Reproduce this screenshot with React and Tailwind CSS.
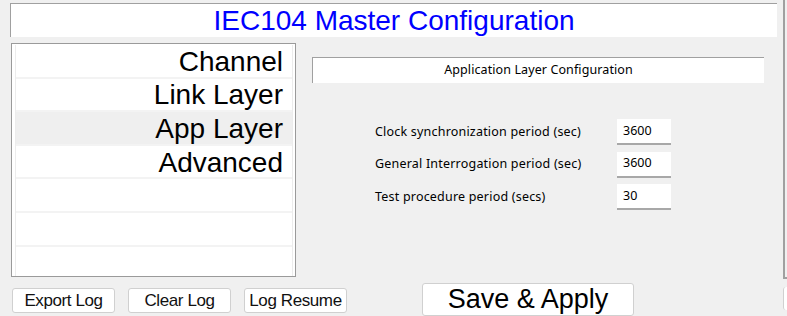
import React from "react";

const sections = ["Channel", "Link Layer", "App Layer", "Advanced", "", "", ""];

const fields = [
  { label: "Clock synchronization period (sec)", value: "3600" },
  { label: "General Interrogation period (sec)", value: "3600" },
  { label: "Test procedure period (secs)", value: "30" },
];

function LogButton({ children }) {
  return (
    <button className="w-[103px] h-[25px] bg-white border border-[#d0d0d0] rounded-[3px] text-[17px] tracking-[-0.4px] leading-none text-[#111] font-['Liberation_Sans',Arial,sans-serif]">
      {children}
    </button>
  );
}

export default function App() {
  const selected = 2;

  return (
    <div className="w-[787px] h-[316px] overflow-hidden bg-[#f0f0f0] flex">
      <div className="w-[783px] shrink-0 flex flex-col">
        {/* Title */}
        <div className="ml-[10px] mt-[3px] w-[767px] h-[34px] bg-white border-t border-l border-[#a0a0a0] flex items-center justify-center">
          <span className="text-[28px] leading-none text-[#0000ff] font-['Liberation_Sans',Arial,sans-serif]">
            IEC104 Master Configuration
          </span>
        </div>

        <div className="mt-[6px] flex">
          {/* Section list */}
          <div className="ml-[11px] w-[285px] h-[234px] border border-[#9a9a9a] bg-white pl-[3px] pr-[2px] pt-[1px] overflow-hidden">
            <div className="border-l border-r border-[#ececec] h-full">
              {sections.map((s, i) => (
                <div
                  key={i}
                  className={`h-[33.6px] border-b-[2px] border-[#f3f3f3] flex items-center justify-end pr-[9px] pt-[2px] text-[28px] leading-none text-black font-['Liberation_Sans',Arial,sans-serif] ${
                    i === selected ? "bg-[#efefef]" : "bg-white"
                  }`}
                >
                  {s}
                </div>
              ))}
            </div>
          </div>

          {/* Config panel */}
          <div className="ml-[16px] flex flex-col">
            <div className="mt-[14px] w-[452px] h-[26px] bg-white border-t border-l border-[#a0a0a0] flex items-center justify-center text-[12.5px] tracking-[0.1px] text-black font-['Noto_Sans',sans-serif]">
              Application Layer Configuration
            </div>
            <div className="mt-[36px] flex flex-col gap-[6.5px]">
              {fields.map((f) => (
                <div key={f.label} className="flex items-center h-[26px]">
                  <span className="ml-[63px] w-[242px] text-[12.5px] tracking-[0.2px] text-black font-['Noto_Sans',sans-serif]">
                    {f.label}
                  </span>
                  <div className="w-[54px] h-[26px] bg-white border-b-[2px] border-[#a8a8a8] pl-[6px] flex items-center text-[12.5px] text-black font-['Noto_Sans',sans-serif]">
                    {f.value}
                  </div>
                </div>
              ))}
            </div>
          </div>
        </div>

        {/* Bottom buttons */}
        <div className="mt-[6px] flex items-start">
          <div className="ml-[12px] mt-[5px] flex gap-[13px]">
            <LogButton>Export Log</LogButton>
            <LogButton>Clear Log</LogButton>
            <LogButton>Log Resume</LogButton>
          </div>
          <button className="ml-[75px] w-[212px] h-[33px] bg-white border border-[#d0d0d0] rounded-[3px] text-[27px] leading-none text-black font-['Liberation_Sans',Arial,sans-serif]">
            Save &amp; Apply
          </button>
        </div>
      </div>

      {/* Partially visible side panel */}
      <div className="flex-1 flex flex-col">
        <div className="h-[279px] border-l-[2px] border-b-[2px] border-[#a0a0a0]" />
        <div className="mt-[8px] h-[23px] border-l border-[#d0d0d0] rounded-l-[3px] bg-white" />
      </div>
    </div>
  );
}
